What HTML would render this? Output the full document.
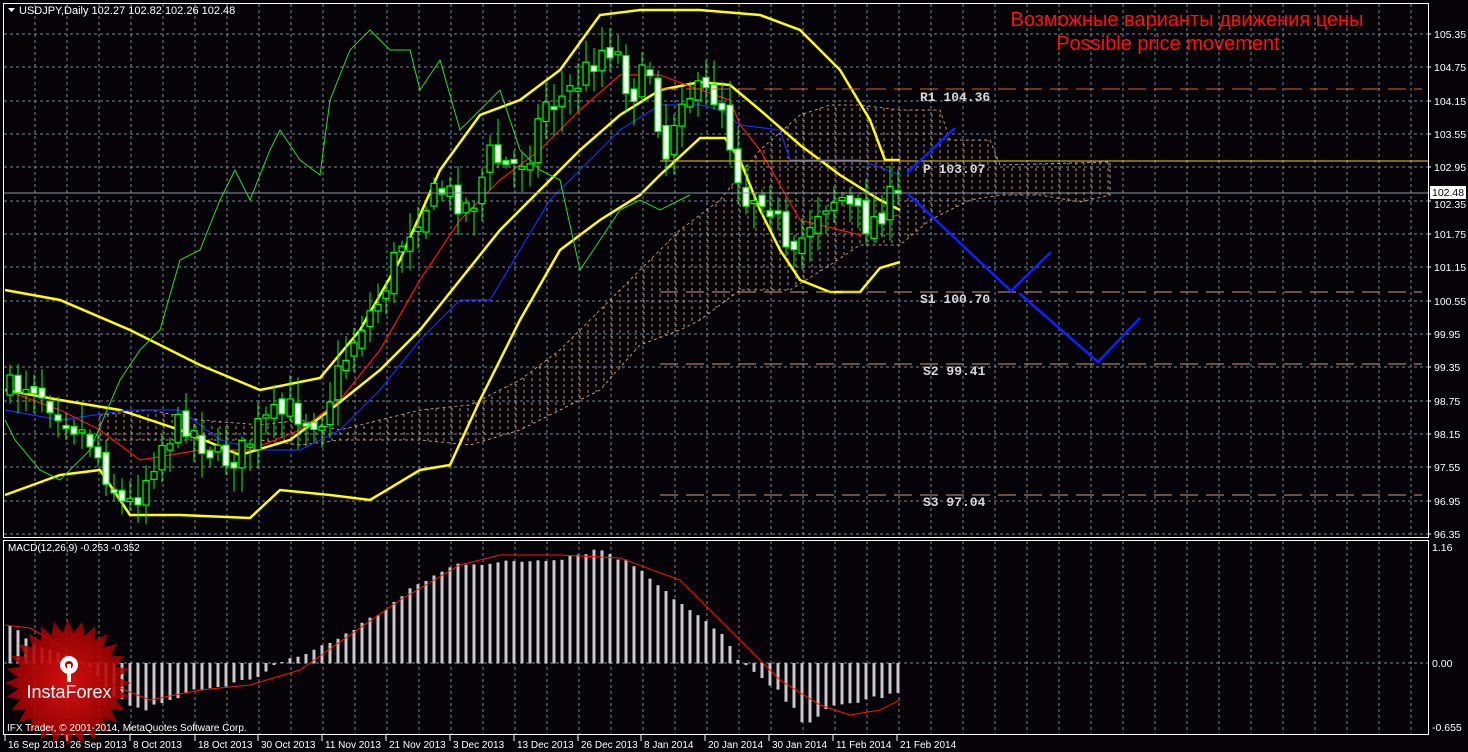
<!DOCTYPE html>
<html><head><meta charset="utf-8">
<style>
html,body{margin:0;padding:0;background:#050308;width:1468px;height:752px;overflow:hidden}
svg{display:block}
text{font-family:"Liberation Sans",sans-serif}
text.mono{font-family:"Liberation Mono",monospace;font-weight:bold}
</style></head>
<body>
<svg id="c" width="1468" height="752" xmlns="http://www.w3.org/2000/svg">
<defs>
<pattern id="hatch" width="8" height="6" patternUnits="userSpaceOnUse">
<line x1="4" y1="0" x2="4" y2="3" stroke="#f0b890" stroke-width="1" opacity="0.75"/>
</pattern>
<radialGradient id="rg" cx="50%" cy="50%" r="50%">
<stop offset="0" stop-color="#e01010" stop-opacity="0.95"/>
<stop offset="1" stop-color="#a00000" stop-opacity="0.85"/>
</radialGradient>
</defs>
<rect width="1468" height="752" fill="#050308"/>
<g id="grid"></g>
<g id="cloud"></g>
<g id="lines"></g>
<g id="candles"></g>
<g id="macd"></g>
<line x1="660" y1="89" x2="1422" y2="89" stroke="#e0602a" stroke-width="1" stroke-dasharray="18,8"/>
<line x1="660" y1="161" x2="1428" y2="161" stroke="#f0d020" stroke-width="1"/>
<line x1="660" y1="292" x2="1422" y2="292" stroke="#d09888" stroke-width="1" stroke-dasharray="18,8"/>
<line x1="660" y1="364" x2="1422" y2="364" stroke="#d09888" stroke-width="1" stroke-dasharray="18,8"/>
<line x1="660" y1="495" x2="1422" y2="495" stroke="#d09888" stroke-width="1" stroke-dasharray="18,8"/>
<line x1="4" y1="193" x2="1428" y2="193" stroke="#8c96a0" stroke-width="1"/>
<g font-size="13" fill="#d8d8d8">
<text class="mono" x="920" y="101">R1 104.36</text>
<text class="mono" x="923" y="173">P 103.07</text>
<text class="mono" x="920" y="303">S1 100.70</text>
<text class="mono" x="923" y="375">S2 99.41</text>
<text class="mono" x="923" y="506">S3 97.04</text>
</g>
<polyline points="907,173 955,128" fill="none" stroke="#1020ff" stroke-width="2.5"/>
<polyline points="907,193 1011,291 1051,252" fill="none" stroke="#1020ff" stroke-width="2.5"/>
<polyline points="1019,293 1098,362 1140,318" fill="none" stroke="#1020ff" stroke-width="2.5"/>
<text x="1187" y="26" text-anchor="middle" font-size="20" fill="#ff1010">Возможные варианты движения цены</text>
<text x="1168" y="50" text-anchor="middle" font-size="20" fill="#ff1010">Possible price movement</text>
<rect x="3.5" y="3.5" width="1425" height="534" fill="none" stroke="#fff" stroke-width="1"/>
<rect x="3.5" y="540.5" width="1425" height="194" fill="none" stroke="#fff" stroke-width="1"/>
<g id="axis" font-size="10.5" fill="#fff"></g>
<rect x="1430" y="186" width="36" height="13" fill="#fff"/>
<text x="1432" y="196" font-size="10.5" fill="#000">102.48</text>
<polygon points="8,8 15,8 11.5,12" fill="#fff"/>
<text x="19" y="14" font-size="11" fill="#fff">USDJPY,Daily  102.27 102.82 102.26 102.48</text>
<text x="8" y="551" font-size="10" fill="#fff">MACD(12,26,9) -0.253 -0.352</text>
<polygon id="star" fill="url(#rg)"/>
<g fill="#fff">
<circle cx="69" cy="665" r="9"/>
<circle cx="69" cy="665" r="4" fill="#c00000"/>
<rect x="67" y="664" width="4" height="18"/>
</g>
<text x="69" y="698" text-anchor="middle" font-size="18" fill="#fff">InstaForex</text>
<text x="7" y="731" font-size="10" fill="#fff">IFX Trader, © 2001-2014, MetaQuotes Software Corp.</text>
<g id="dates" font-size="10" fill="#fff"></g>
</svg>
<script>
(function(){
var NS='http://www.w3.org/2000/svg';
function el(par,tag,a){var e=document.createElementNS(NS,tag);for(var k in a)e.setAttribute(k,a[k]);document.getElementById(par).appendChild(e);return e;}
for(var gx=35;gx<1428;gx+=32){el('grid','line',{x1:gx,y1:4,x2:gx,y2:537,stroke:'#7a8898','stroke-dasharray':'3,3'});el('grid','line',{x1:gx,y1:541,x2:gx,y2:734,stroke:'#7a8898','stroke-dasharray':'3,3'});}
var labs=['105.35','104.75','104.15','103.55','102.95','102.35','101.75','101.15','100.55','99.95','99.35','98.75','98.15','97.55','96.95','96.35'];
for(var k=0;k<16;k++){var gy=Math.round(34+33.33*k);el('grid','line',{x1:4,y1:gy,x2:1428,y2:gy,stroke:'#7a8898','stroke-dasharray':'3,3'});
 var t=el('axis','text',{x:1434,y:gy+(k==5?7:4)});t.textContent=labs[k];
 el('axis','line',{x1:1428,y1:gy,x2:1431,y2:gy,stroke:'#fff'});}
el('grid','line',{x1:4,y1:663,x2:1428,y2:663,stroke:'#7a8898','stroke-dasharray':'3,3'});
[['1.16',551],['0.00',667],['-0.655',731]].forEach(function(a){var t=el('axis','text',{x:1432,y:a[1]});t.textContent=a[0];});
function interp(pts,x){if(x<=pts[0][0])return pts[0][1];for(var i=1;i<pts.length;i++){if(x<=pts[i][0]){var a=pts[i-1],b=pts[i];return a[1]+(b[1]-a[1])*(x-a[0])/(b[0]-a[0]);}}return pts[pts.length-1][1];}
function pl(pts,col,w,par){el(par||'lines','polyline',{points:pts.map(function(p){return p.join(',')}).join(' '),fill:'none',stroke:col,'stroke-width':w});}
var ct=[[100,415],[150,410],[200,420],[260,425],[300,420],[340,430],[380,420],[420,410],[470,405],[520,380],[560,350],[600,310],[640,270],[680,230],[720,200],[760,150],[800,115],[830,105],[860,105],[900,110],[940,110],[950,140],[990,140],[1000,165],[1110,162]];
var cb=[[1110,195],[1080,202],[1040,195],[1000,195],[970,200],[930,220],[900,245],[860,245],[830,265],[790,290],[740,290],[700,320],[680,330],[640,345],[600,390],[560,410],[520,430],[470,445],[420,440],[380,440],[340,440],[300,445],[260,440],[200,440],[150,440],[100,440]];
el('cloud','polygon',{points:ct.concat(cb).map(function(p){return p.join(',')}).join(' '),fill:'url(#hatch)',stroke:'#f0b890','stroke-width':1,'stroke-dasharray':'3,3','stroke-opacity':0.8});
pl([[5,290],[60,300],[130,330],[200,365],[260,390],[320,378],[360,330],[400,260],[440,170],[480,115],[520,100],[560,70],[600,15],[640,10],[700,10],[760,15],[800,30],[840,70],[870,120],[885,160],[900,160]],'#ffff00',2.5);
pl([[5,390],[60,400],[120,410],[180,430],[240,455],[290,440],[330,410],[380,370],[420,330],[460,280],[500,230],[540,190],[580,150],[620,115],[660,90],[700,82],[730,85],[760,110],[800,145],[840,175],[880,200],[900,210]],'#ffff00',2.5);
pl([[5,495],[60,475],[100,470],[130,515],[180,515],[250,518],[280,490],[330,495],[370,500],[420,470],[450,465],[480,400],[520,320],[560,250],[600,220],[640,195],[660,175],[700,138],[725,138],[740,160],[760,210],[780,250],[800,280],[830,292],[860,292],[880,268],[900,262]],'#ffff00',2.5);
pl([[5,410],[60,420],[130,410],[180,410],[220,440],[260,450],[300,450],[340,430],[380,390],[420,340],[460,300],[490,300],[520,250],[550,200],[580,170],[620,130],[660,105],[700,105],[720,110],[740,125],[780,130],[790,160],[860,160],[900,175]],'#1a2aff',1.2);
pl([[5,390],[60,410],[100,430],[140,460],[200,450],[250,450],[300,430],[340,400],[380,350],[420,280],[460,220],[500,180],[540,150],[580,110],[620,75],[660,75],[700,90],[730,100],[740,125],[760,150],[800,220],[840,230],[860,235],[880,220],[898,215]],'#ff1010',1.2);
pl([[5,420],[15,440],[40,470],[60,480],[90,450],[120,380],[140,350],[160,330],[180,260],[200,250],[220,200],[235,170],[250,200],[270,150],[280,130],[300,160],[320,175],[330,100],[350,50],[370,30],[390,50],[410,50],[420,90],[440,60],[460,130],[480,110],[500,90],[520,150],[540,170],[560,180],[580,270],[600,240],[620,210],[640,200],[660,210],[690,195]],'#20e020',1);
var seed=7;function rnd(){seed=(seed*16807)%2147483647;return seed/2147483647;}
var cp=[[10,390],[30,380],[50,400],[70,420],[90,440],[110,480],[125,510],[140,490],[160,445],[185,420],[200,440],[220,460],[240,455],[260,425],[290,410],[320,420],[340,370],[360,325],[380,300],[400,245],[420,210],[440,190],[460,200],[470,210],[490,155],[510,170],[530,150],[545,100],[560,100],[580,80],[600,50],[615,45],[630,95],[650,70],[665,160],[680,90],[700,95],[720,95],[732,150],[745,200],[760,190],[775,210],[790,275],[805,230],[820,205],[840,195],[855,215],[870,225],[885,205],[898,193]];
var prev=390;
for(var i=0;i<112;i++){var cx=10+8*i;var c=interp(cp,cx)+(rnd()-0.5)*30;if(i==111)c=193;var o=prev+(rnd()-0.5)*12;
 var bt=Math.min(o,c),bb=Math.max(o,c);if(bb-bt<3){bb=bt+3;}
 var hi=bt-4-rnd()*22,lo=bb+4+rnd()*22;
 el('candles','line',{x1:cx,y1:hi,x2:cx,y2:lo,stroke:'#00ff00'});
 el('candles','rect',{x:cx-3,y:bt,width:6,height:bb-bt,fill:(c<o)?'#050308':'#ffffff',stroke:'#00ff00','stroke-width':1.2});
 prev=c;}
var hp=[[8,0.38],[20,0.33],[35,0.15],[60,0.1],[90,-0.05],[110,-0.3],[140,-0.47],[170,-0.38],[200,-0.25],[230,-0.2],[260,-0.15],[280,0.02],[300,0.07],[330,0.2],[380,0.5],[420,0.8],[460,1.0],[500,1.0],[560,1.05],[600,1.14],[640,0.95],[680,0.6],[720,0.3],[738,0.05],[760,-0.15],[780,-0.3],[805,-0.6],[830,-0.45],[870,-0.35],[900,-0.3]];
for(var i=0;i<112;i++){var mx=10+8*i;var v=interp(hp,mx)+(rnd()-0.5)*0.05;var my=663-v*100;
 el('macd','rect',{x:mx-1.5,y:Math.min(my,663),width:3,height:Math.abs(my-663)+0.5,fill:'#c8c8c8'});}
pl([[5,625],[30,628],[60,645],[100,680],[150,700],[200,690],[250,685],[300,670],[350,635],[400,600],[460,565],[500,555],[560,555],[620,558],[680,580],[740,640],[780,680],[820,705],[850,715],[880,710],[900,700]],'#ff1010',1,'macd');
var s=[];for(var j=0;j<56;j++){var a=j*Math.PI/28,r=(j%2)?50:63;s.push((68+r*Math.cos(a)).toFixed(1)+','+(683+r*Math.sin(a)).toFixed(1));}
document.getElementById('star').setAttribute('points',s.join(' '));
[['16 Sep 2013',5],['26 Sep 2013',67],['8 Oct 2013',130],['18 Oct 2013',195],['30 Oct 2013',258],['11 Nov 2013',322],['21 Nov 2013',386],['3 Dec 2013',450],['13 Dec 2013',514],['26 Dec 2013',578],['8 Jan 2014',641],['20 Jan 2014',705],['30 Jan 2014',769],['11 Feb 2014',833],['21 Feb 2014',897]].forEach(function(d){
 var t=el('dates','text',{x:d[1]+3,y:748});t.textContent=d[0];el('dates','line',{x1:d[1],y1:735,x2:d[1],y2:741,stroke:'#fff'});});
})();
</script>
</body></html>
